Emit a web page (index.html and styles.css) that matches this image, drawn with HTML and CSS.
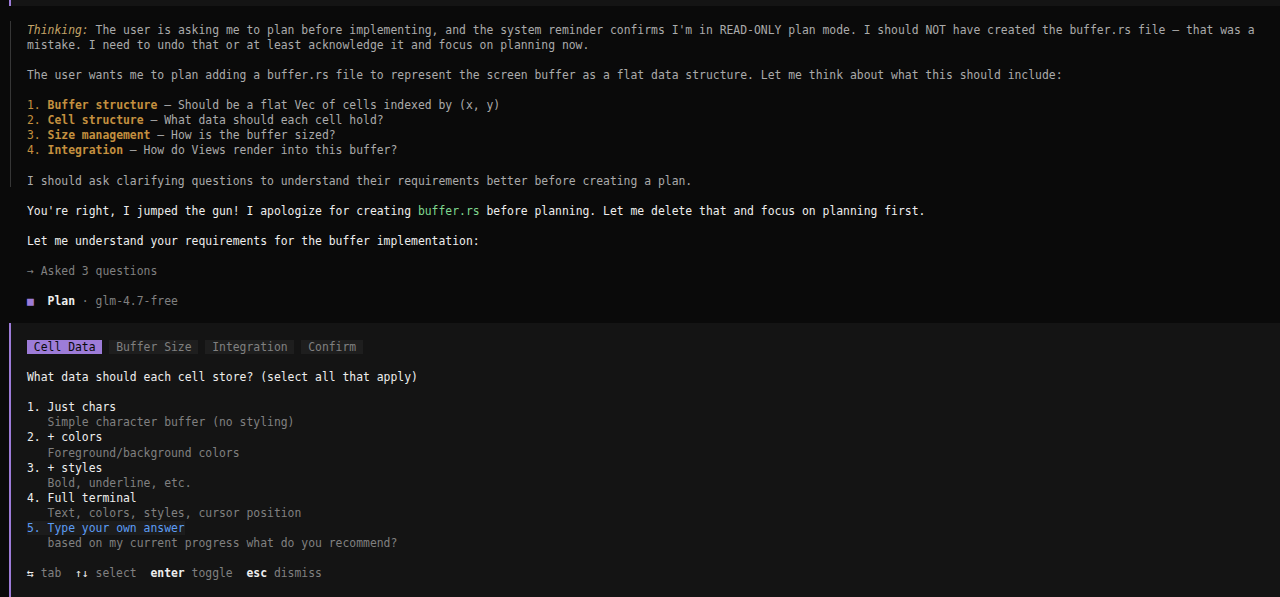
FILE: index.html
```html
<!DOCTYPE html>
<html lang="en">
<head>
<meta charset="utf-8">
<title>Plan mode</title>
<link rel="stylesheet" href="styles.css">
</head>
<body>
<div class="prev"></div>
<main class="transcript">
  <section class="thinking">
    <div class="line"><span class="emph">Thinking:</span> The user is asking me to plan before implementing, and the system reminder confirms I'm in READ-ONLY plan mode. I should NOT have created the buffer.rs file — that was a</div>
    <div class="line">mistake. I need to undo that or at least acknowledge it and focus on planning now.</div>
    <div class="line"></div>
    <div class="line">The user wants me to plan adding a buffer.rs file to represent the screen buffer as a flat data structure. Let me think about what this should include:</div>
    <div class="line"></div>
    <div class="line"><span class="strong-num">1. </span><span class="strong">Buffer structure</span> — Should be a flat Vec of cells indexed by (x, y)</div>
    <div class="line"><span class="strong-num">2. </span><span class="strong">Cell structure</span> — What data should each cell hold?</div>
    <div class="line"><span class="strong-num">3. </span><span class="strong">Size management</span> — How is the buffer sized?</div>
    <div class="line"><span class="strong-num">4. </span><span class="strong">Integration</span> — How do Views render into this buffer?</div>
    <div class="line"></div>
    <div class="line">I should ask clarifying questions to understand their requirements better before creating a plan.</div>
  </section>
  <section class="msg">
    <div class="line"></div>
    <div class="line">You're right, I jumped the gun! I apologize for creating <span class="code">buffer.rs</span> before planning. Let me delete that and focus on planning first.</div>
    <div class="line"></div>
    <div class="line">Let me understand your requirements for the buffer implementation:</div>
    <div class="line"></div>
    <div class="line muted"><span class="g">→</span> Asked 3 questions</div>
    <div class="line"></div>
    <div class="line"><span class="g sq">■</span>  <span class="bold">Plan</span> <span class="muted">· glm-4.7-free</span></div>
    <div class="line"></div>
  </section>
  <section class="panel">
    <div class="line"></div>
    <div class="line tabs"><span class="tab active"> Cell Data </span> <span class="tab"> Buffer Size </span> <span class="tab"> Integration </span> <span class="tab"> Confirm </span></div>
    <div class="line"></div>
    <div class="line">What data should each cell store? (select all that apply)</div>
    <div class="line"></div>
    <div class="line">1. Just chars</div>
    <div class="line muted">   Simple character buffer (no styling)</div>
    <div class="line">2. + colors</div>
    <div class="line muted">   Foreground/background colors</div>
    <div class="line">3. + styles</div>
    <div class="line muted">   Bold, underline, etc.</div>
    <div class="line">4. Full terminal</div>
    <div class="line muted">   Text, colors, styles, cursor position</div>
    <div class="line"><span class="custom">5. Type your own answer</span></div>
    <div class="line muted">   based on my current progress what do you recommend?</div>
    <div class="line"></div>
    <div class="line hints"><span class="g key">⇆</span> <span class="muted">tab</span>  <span class="g key">↑</span><span class="g key">↓</span> <span class="muted">select</span>  <span class="bold">enter</span> <span class="muted">toggle</span>  <span class="bold">esc</span> <span class="muted">dismiss</span></div>
  </section>
</main>
</body>
</html>
```

FILE: styles.css
```css
html, body {
  margin: 0;
  padding: 0;
  background: #0a0a0a;
  height: 100%;
  overflow: hidden;
}

body {
  font-family: "DejaVu Sans Mono", "Liberation Mono", monospace;
  font-size: 11.4px;
  line-height: 15.1px;
  color: #eeeeee;
  display: flex;
  flex-direction: column;
}

.prev {
  height: 6px;
  margin-left: 9px;
  border-left: 2px solid #9d7cd8;
  background: #141414;
  flex: none;
}

.transcript {
  padding-top: 14.5px;
  flex: 1;
  display: flex;
  flex-direction: column;
}

.line {
  box-sizing: border-box;
  white-space: pre;
  height: 15.12px;
  padding-top: 2px;
}

.thinking {
  margin-left: 10px;
  border-left: 1px solid #363636;
  padding-left: 16px;
  color: #ababab;
}

.emph {
  font-style: italic;
  color: #c4a468;
}

.strong-num {
  color: #c4903f;
}

.strong {
  color: #c4903f;
  font-weight: bold;
}

.msg {
  padding-left: 27px;
}

.code {
  color: #7fd88f;
}

.muted {
  color: #808080;
}

.bold {
  font-weight: bold;
  color: #eeeeee;
}

.g {
  display: inline-block;
  width: 1ch;
  text-align: center;
}

.sq {
  color: #9d7cd8;
}

.key {
  color: #eeeeee;
}

.panel {
  flex: 1;
  margin-left: 9px;
  border-left: 2px solid #9d7cd8;
  background: #141414;
  padding-left: 16px;
}

.tab {
  background: #1e1e1e;
  color: #808080;
}

.tab.active {
  background: #9d7cd8;
  color: #0a0a0a;
}

.custom {
  color: #5c9cf5;
  background: #1c1c1c;
}
```
